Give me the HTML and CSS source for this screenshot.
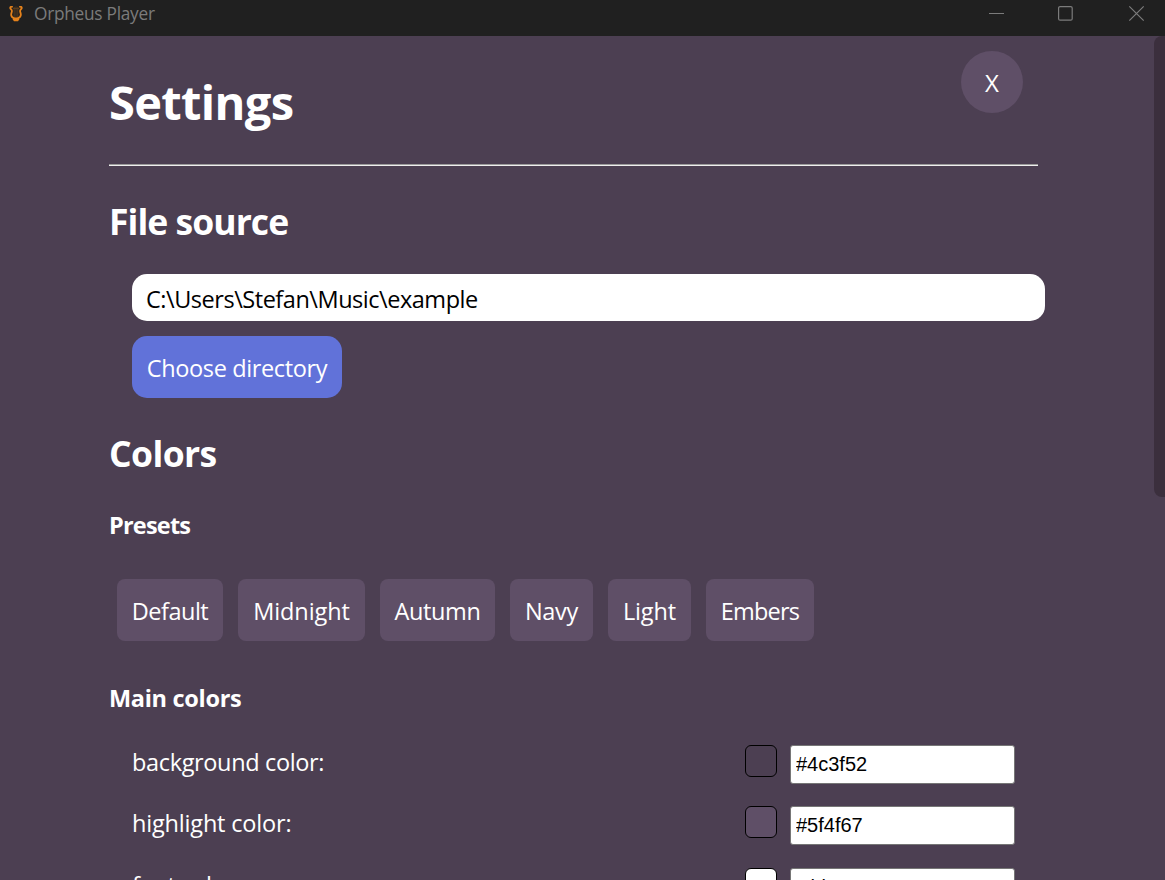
FILE: index.html
```html
<!DOCTYPE html>
<html lang="en">
<head>
<meta charset="utf-8">
<title>Orpheus Player</title>
<link rel="stylesheet" href="styles.css">
</head>
<body>
<header class="titlebar">
  <svg class="logo" width="14" height="16" viewBox="0 0 14 16" fill="none">
    <path d="M5.200 1v11M7 .5v12M8.800 1v11M4 2.500h6" stroke="#65411c" stroke-width=".8"/>
    <path d="M3.600 1.200C2.300.2 1 .9 1.300 2.200c.3 1.300 1.800 1.400 1.600 3-.1 1.300-.9 2.200-.7 3.900.2 1.700 1.800 2.800 3.300 3.200h3c1.500-.4 3.100-1.500 3.300-3.200.2-1.700-.6-2.600-.7-3.900-.2-1.600 1.300-1.700 1.600-3 .3-1.300-1-2-2.300-1" stroke="#e5821b" stroke-width="1.800"/>
    <path d="M3.800 12h6.400v1.600L9 15.200H5l-1.200-1.600z" fill="#e5821b"/>
  </svg>
  <span class="app-name">Orpheus Player</span>
  <svg class="controls" width="157" height="17" viewBox="0 0 157 17" fill="none" stroke="#7b7b7b">
    <path d="M1 8.500h15"/>
    <rect x="70.600" y="1.600" width="13.600" height="13.600" rx="1.500" stroke-width="1.200"/>
    <path d="M141.300 1.300l14.400 14.400M155.700 1.300l-14.400 14.400" stroke-width="1.200"/>
  </svg>
</header>
<div class="viewport">
  <main class="settings">
    <div class="heading">
      <h1 class="title">Settings</h1>
      <button class="close">X</button>
    </div>
    <hr class="rule">
    <h2 class="section-title file-title">File source</h2>
    <div class="source">
      <div class="path">C:\Users\Stefan\Music\example</div>
      <button class="choose">Choose directory</button>
    </div>
    <h2 class="section-title colors-title">Colors</h2>
    <h3 class="subtitle presets-title">Presets</h3>
    <div class="presets">
      <button class="preset default">Default</button>
      <button class="preset midnight">Midnight</button>
      <button class="preset autumn">Autumn</button>
      <button class="preset navy">Navy</button>
      <button class="preset light">Light</button>
      <button class="preset embers">Embers</button>
    </div>
    <h3 class="subtitle main-title">Main colors</h3>
    <div class="colors">
      <div class="color-row"><span class="label">background color:</span><i class="swatch background"></i><input class="value" value="#4c3f52" aria-label="background color"></div>
      <div class="color-row"><span class="label label-highlight">highlight color:</span><i class="swatch highlight"></i><input class="value" value="#5f4f67" aria-label="highlight color"></div>
      <div class="color-row"><span class="label">font color:</span><i class="swatch font"></i><input class="value" value="white" aria-label="font color"></div>
    </div>
  </main>
  <div class="scrollbar"><div class="thumb"></div></div>
</div>
</body>
</html>
```
FILE: styles.css
```css
* { box-sizing: border-box; }
body {
  margin: 0;
  height: 880px;
  overflow: hidden;
  display: flex;
  flex-direction: column;
  background: #4c3f52;
  color: #fff;
  font: 23.5px/32px "Open Sans", "Noto Sans", sans-serif;
}
h1, h2, h3 { margin: 0; font-weight: 700; }
button { border: 0; color: #fff; font: inherit; white-space: nowrap; }
.titlebar {
  flex: none;
  height: 36px;
  display: flex;
  align-items: flex-start;
  padding: 5px 20px 0 9px;
  background: #202020;
  color: #7b7b7b;
}
.logo { margin-top: 1px; }
.app-name { margin-left: 11px; font-size: 17.3px; line-height: 18px; letter-spacing: -.27px; }
.controls { margin-left: auto; }
.viewport { flex: 1; min-height: 0; overflow: hidden; display: flex; justify-content: space-between; }
.settings { width: 936px; margin-left: 109px; }
.heading { display: flex; justify-content: space-between; height: 128px; padding-right: 22px; }
.title { margin-top: 34px; font-size: 47px; line-height: 64px; letter-spacing: -.65px; }
.close {
  width: 62px;
  height: 62px;
  margin-top: 15px;
  padding: 1px 0 0;
  border-radius: 50%;
  background: #5f4f67;
  font-size: 24px;
}
.rule { width: 929px; height: 2px; margin: 0; border: 0; border-top: 1px solid #9a9a9a; border-bottom: 1px solid #eee; }
.section-title { font-size: 35.5px; line-height: 48px; }
.file-title { margin-top: 31px; letter-spacing: -.95px; }
.source { display: flex; flex-direction: column; align-items: flex-start; gap: 15px; margin: 29px 0 0 23px; }
.path {
  width: 913px;
  height: 47px;
  padding: 9px 14px 6px;
  border-radius: 15px;
  background: #fff;
  color: #000;
  letter-spacing: -.47px;
}
.choose { width: 210px; height: 62px; padding: 2px 0 0; border-radius: 15px; background: #6172d9; letter-spacing: -.37px; }
.colors-title { margin-top: 31px; letter-spacing: -.6px; }
.subtitle { font-size: 23.5px; line-height: 32px; letter-spacing: -.3px; }
.presets-title { margin-top: 32px; letter-spacing: -.8px; }
.presets { display: flex; gap: 15px; margin: 38px 0 0 8px; }
.preset { height: 62px; padding: 2px 0 0; border-radius: 8px; background: #5f4f67; }
.default { width: 106px; letter-spacing: -.5px; }
.midnight { width: 127px; letter-spacing: -.1px; }
.autumn { width: 115px; letter-spacing: -.4px; }
.navy { width: 83px; letter-spacing: -.3px; }
.light { width: 83px; letter-spacing: -.1px; }
.embers { width: 108px; letter-spacing: -.8px; }
.main-title { margin-top: 41px; }
.colors { margin: 31px 0 0 23px; }
.color-row { display: flex; align-items: flex-start; height: 61.4px; }
.label { width: 613px; margin-top: 1px; letter-spacing: -.35px; }
.label-highlight { letter-spacing: -.18px; }
.swatch { width: 32px; height: 32px; border: 1px solid #000; border-radius: 6px; }
.background { background: #4c3f52; }
.highlight { background: #5f4f67; }
.font { background: #fff; }
.value {
  width: 225px;
  height: 39px;
  margin-left: 13px;
  padding: 0 5px;
  border: 1px solid #767676;
  border-radius: 3px;
  background: #fff;
  color: #000;
  font: 20px "Liberation Sans", Arial, sans-serif;
}
.scrollbar { width: 11px; }
.thumb { height: 461px; border-radius: 8px 0 0 8px; background: #3b2f3d; }
```
